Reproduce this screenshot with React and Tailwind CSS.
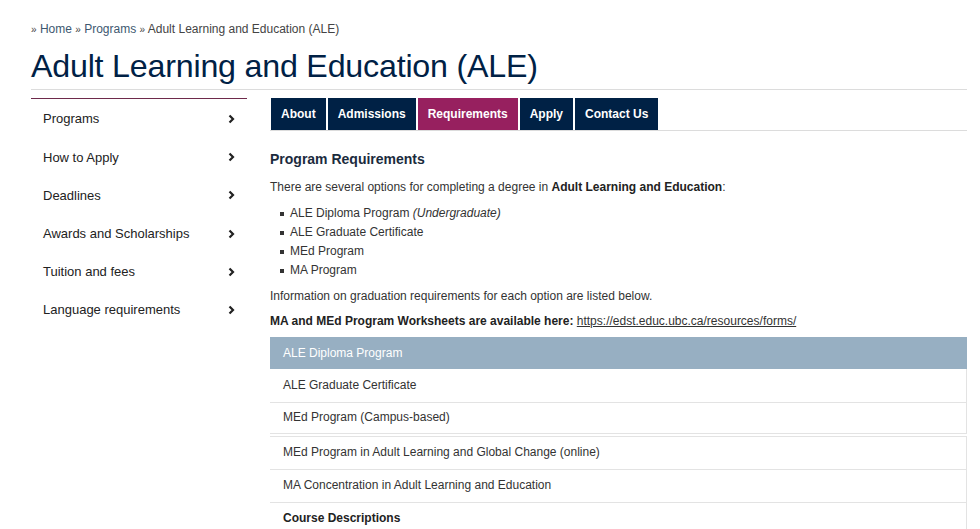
import React from 'react';

const sideLinks = [
  'Programs',
  'How to Apply',
  'Deadlines',
  'Awards and Scholarships',
  'Tuition and fees',
  'Language requirements',
];

const tabs = [
  { label: 'About' },
  { label: 'Admissions' },
  { label: 'Requirements', active: true },
  { label: 'Apply' },
  { label: 'Contact Us' },
];

// accordion rows below the open header
const panels = [
  { label: 'ALE Graduate Certificate', h: 'h-[34px]' },
  { label: 'MEd Program (Campus-based)', h: 'h-[31px]' },
  { label: 'MEd Program in Adult Learning and Global Change (online)', h: 'h-[34px]', gap: true },
  { label: 'MA Concentration in Adult Learning and Education', h: 'h-[33px]' },
  { label: 'Course Descriptions', h: 'h-[33px]', bold: true },
];

const Chevron = () => (
  <svg width="7" height="10" viewBox="0 0 7 10" className="text-[#222]">
    <path d="M1.5 1.5 L5 5 L1.5 8.5" fill="none" stroke="currentColor" strokeWidth="2.2" />
  </svg>
);

const Bullet = () => <span className="mr-[6px] inline-block h-[4px] w-[4px] shrink-0 bg-[#333]" />;

const App = () => {
  return (
    <div className="min-h-[529px] bg-white font-['Liberation_Sans',Arial,sans-serif] text-[#333]">
      <div className="pl-[31px] pr-[13px] pt-[21px]">
        {/* breadcrumb */}
        <div className="text-[12px] leading-[17px] text-[#444]">
          <span className="text-[10px]">»</span> <a className="text-[#3d5870]">Home</a>{' '}
          <span className="text-[10px]">»</span> <a className="text-[#3d5870]">Programs</a>{' '}
          <span className="text-[10px]">»</span> Adult Learning and Education (ALE)
        </div>

        <h1 className="mt-[8px] text-[32.2px] leading-[40px] text-[#002145] tracking-[-0.2px]">
          Adult Learning and Education (ALE)
        </h1>
        <div className="mt-[3px] border-t border-[#dcdcdc]" />

        <div className="mt-[8px] flex">
          {/* sidebar */}
          <div className="w-[216px] shrink-0">
            <div className="border-t border-[#6e2a4b]" />
            <ul className="pt-[1px]">
              {sideLinks.map((item) => (
                <li key={item} className="flex h-[38.2px] items-center justify-between pl-[12px] pr-[12px] text-[13px] text-[#222]">
                  <span>{item}</span>
                  <Chevron />
                </li>
              ))}
            </ul>
          </div>

          {/* main */}
          <div className="ml-[23px] flex-1">
            <div className="flex border-b border-[#dcdcdc] pl-[1px]">
              {tabs.map((t) => (
                <div
                  key={t.label}
                  className={`mr-[2px] flex h-[32px] items-center px-[10px] text-[12px] font-bold text-white ${
                    t.active ? 'bg-[#97205f]' : 'bg-[#002145]'
                  }`}
                >
                  {t.label}
                </div>
              ))}
            </div>

            <h2 className="mt-[19px] text-[14px] font-bold leading-[18px] text-[#1b2b3d]">Program Requirements</h2>

            <p className="mt-[11px] text-[12px] leading-[17px]">
              There are several options for completing a degree in <b className="text-[#222]">Adult Learning and Education</b>:
            </p>

            <ul className="mt-[8px] pl-[10px] text-[12px] leading-[19px]">
              <li className="flex items-center">
                <Bullet />
                ALE Diploma Program&nbsp;<i>(Undergraduate)</i>
              </li>
              <li className="flex items-center">
                <Bullet />
                ALE Graduate Certificate
              </li>
              <li className="flex items-center">
                <Bullet />
                MEd Program
              </li>
              <li className="flex items-center">
                <Bullet />
                MA Program
              </li>
            </ul>

            <p className="mt-[8px] text-[12px] leading-[17px]">
              Information on graduation requirements for each option are listed below.
            </p>
            <p className="mt-[8px] text-[12px] leading-[17px]">
              <b className="text-[#222]">MA and MEd Program Worksheets are available here:</b>{' '}
              <a className="text-[#333] underline">https://edst.educ.ubc.ca/resources/forms/</a>
            </p>

            {/* accordion */}
            <div className="mt-[7px] w-[697px]">
              <div className="flex h-[32px] items-center bg-[#97afc2] pb-[1px] pl-[13px] text-[12px] text-white">
                ALE Diploma Program
              </div>
              {panels.map((p) => (
                <div
                  key={p.label}
                  className={`flex ${p.h} items-center border-r border-b border-[#e3e3e3] pb-[2px] pl-[13px] text-[12px] ${
                    p.gap ? 'mt-[2px] border-t' : ''
                  } ${p.bold ? 'font-bold text-[#222]' : 'text-[#333]'}`}
                >
                  {p.label}
                </div>
              ))}
            </div>
          </div>
        </div>
      </div>
    </div>
  );
};

export default App;
